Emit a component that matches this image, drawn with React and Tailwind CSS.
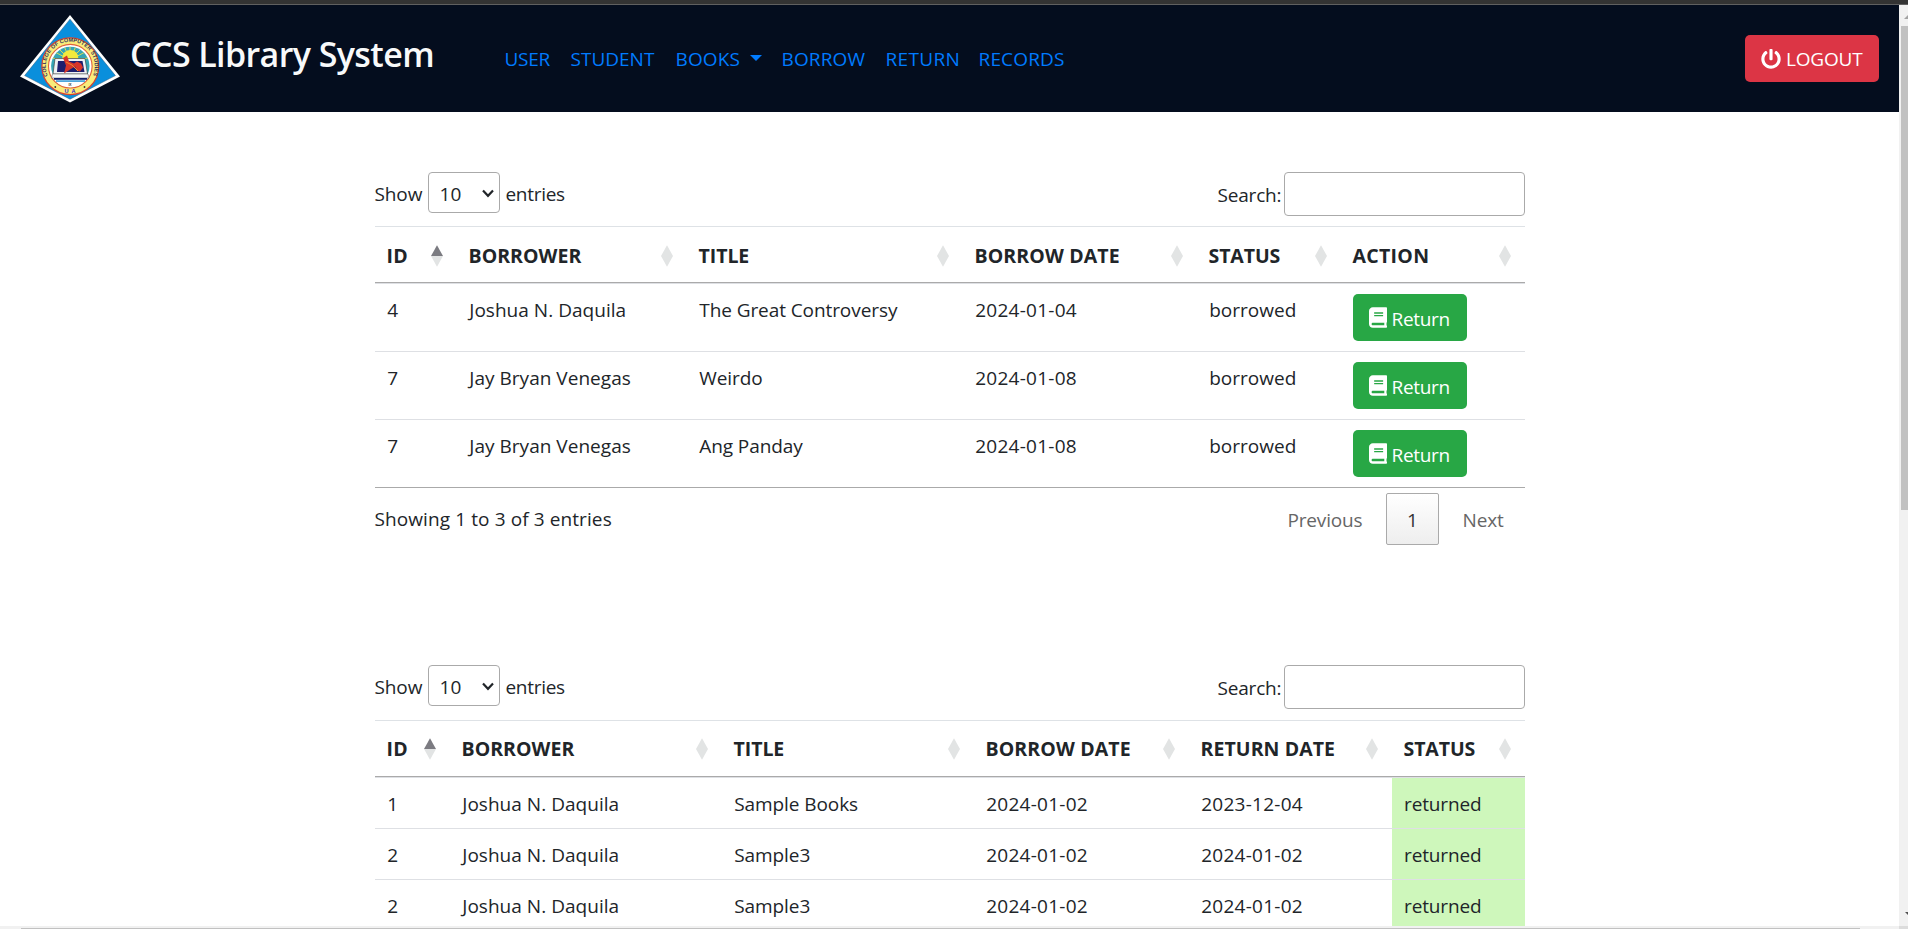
import { FaBook, FaPowerOff } from "react-icons/fa";

const NAV = [
  { label: "USER", cls: "w-[66px] tracking-[-0.28px]" },
  { label: "STUDENT", cls: "w-[105px] tracking-[0px]" },
  { label: "BOOKS", cls: "w-[106px] tracking-[0.13px]", caret: true },
  { label: "BORROW", cls: "w-[104px] tracking-[0.14px]" },
  { label: "RETURN", cls: "w-[93px] tracking-[0.33px]" },
  { label: "RECORDS", cls: "w-[90px] tracking-[0.16px]" },
];

const BORROWED_COLS = [
  { label: "ID", w: "w-[82px]", th: "tracking-[0.3px]", sorted: true },
  { label: "BORROWER", w: "w-[230px]", th: "tracking-[0.04px]" },
  { label: "TITLE", w: "w-[276px]", th: "tracking-[-0.05px]" },
  { label: "BORROW DATE", w: "w-[234px]", th: "tracking-[0.12px]" },
  { label: "STATUS", w: "w-[144px]", th: "tracking-[-0.1px]" },
  { label: "ACTION", w: "w-[184px]", th: "tracking-[0.3px]" },
];

const BORROWED_ROWS = [
  ["4", "Joshua N. Daquila", "The Great Controversy", "2024-01-04"],
  ["7", "Jay Bryan Venegas", "Weirdo", "2024-01-08"],
  ["7", "Jay Bryan Venegas", "Ang Panday", "2024-01-08"],
];

const RETURNED_COLS = [
  { label: "ID", w: "w-[75px]", th: "tracking-[0.3px]", sorted: true },
  { label: "BORROWER", w: "w-[272px]", th: "tracking-[0.04px]" },
  { label: "TITLE", w: "w-[252px]", th: "tracking-[-0.05px]" },
  { label: "BORROW DATE", w: "w-[215px]", th: "tracking-[0.12px]" },
  { label: "RETURN DATE", w: "w-[203px]", th: "tracking-[0.08px]" },
  { label: "STATUS", w: "w-[133px]", th: "tracking-[-0.1px]" },
];

const RETURNED_ROWS = [
  ["1", "Joshua N. Daquila", "Sample Books", "2024-01-02", "2023-12-04"],
  ["2", "Joshua N. Daquila", "Sample3", "2024-01-02", "2024-01-02"],
  ["2", "Joshua N. Daquila", "Sample3", "2024-01-02", "2024-01-02"],
];

const CELL_TRACKING = ["", "tracking-[0.03px]", "tracking-[-0.08px]", "tracking-[0.25px]", "tracking-[0.25px]"];

function Logo() {
  return (
    <svg className="h-[88px] w-[100px] shrink-0" viewBox="0 0 100 88">
      <defs>
        <path id="ring" d="M 28.2 61.9 A 24.5 24.5 0 1 1 72.4 61.9" />
        <clipPath id="disc"><circle cx="50.3" cy="51" r="19.2" /></clipPath>
      </defs>
      <polygon points="50,0 100,61.5 50,87.5 0,61.5" fill="#fff" />
      <polygon points="50,4.2 95.4,60.6 50,84.2 4.6,60.6" fill="#0a8fdc" stroke="#2a5d80" strokeWidth="0.5" />
      <circle cx="50.3" cy="51.2" r="28.4" fill="#f9ec7a" stroke="#d9452e" strokeWidth="1.3" />
      <circle cx="50.3" cy="51.2" r="21.8" fill="#fff" stroke="#e0623a" strokeWidth="1.1" />
      <g clipPath="url(#disc)">
        <rect x="30" y="31" width="41" height="30" fill="#35a5b5" />
        <path
          d="M50 45 L33 36 M50 45 L38 33 M50 45 L44 31 M50 45 L50 31 M50 45 L56 31 M50 45 L62 33 M50 45 L67 36 M50 45 L31 43 M50 45 L69 43"
          stroke="#d9dc55"
          strokeWidth="1"
        />
        <circle cx="50.3" cy="43" r="8" fill="#f3ea3c" />
      </g>
      <polygon points="35,43.5 65,43.5 67.5,59 33,59" fill="#eef1f4" stroke="#333" strokeWidth="0.6" />
      <polygon points="38,46 62.5,46 64.5,57 37,57" fill="#1d1e6e" />
      <path d="M43 43 l4 -2.5 2 6 5 2 3 -2 4 2 2 4 -3 4 -3 -1 -2 -4 -5 3 -6 4 2 -8 z" fill="#d7352a" />
      <path d="M46 47 l6 3 6 6" stroke="#f08a2c" strokeWidth="1" fill="none" />
      <polygon points="32.5,59 68,59 69,63 31.5,63" fill="#f5f7fa" stroke="#555" strokeWidth="0.5" />
      <rect x="34" y="63" width="33" height="1.8" fill="#15206b" />
      <rect x="36" y="65.2" width="29" height="1.8" fill="#4da7dd" />
      <text fontFamily="Liberation Sans, sans-serif" fontSize="5.4" fontWeight="700" fill="#34305a">
        <textPath href="#ring" startOffset="1" textLength="96" lengthAdjust="spacing">COLLEGE OF COMPUTER STUDIES</textPath>
      </text>
      <text x="50" y="71.3" textAnchor="middle" fontFamily="Liberation Sans, sans-serif" fontSize="3.4" fontWeight="700" fill="#333">IX</text>
      <text x="51.5" y="78.2" textAnchor="middle" fontFamily="Liberation Sans, sans-serif" fontSize="5.6" fontWeight="700" letterSpacing="3" fill="#1a1ad0">UA</text>
      <circle cx="35.3" cy="72" r="0.9" fill="#333" />
      <circle cx="64.5" cy="72" r="0.9" fill="#333" />
    </svg>
  );
}

function SortIcon({ sorted }) {
  return (
    <svg className="h-[22px] w-[12px]" viewBox="0 0 12 22">
      <polygon points="6,0.3 12,11 0,11" fill={sorted ? "#7b7b81" : "#e2e4e4"} />
      <polygon points="0,11 12,11 6,21.7" fill="#e2e4e4" />
    </svg>
  );
}

function Controls() {
  return (
    <div className="flex h-[44px] items-start justify-between">
      <div className="flex">
        <span className="w-[53px] pt-[7px] tracking-[-0.1px]">Show</span>
        <div className="flex h-[41px] w-[72px] items-start justify-between rounded-[4px] border border-[#aaa] pt-[6px] pr-[5px] pl-[11px]">
          <span className="tracking-[0.14px]">10</span>
          <svg className="mt-[10px] h-[10px] w-[12px]" viewBox="0 0 12 10" fill="none" stroke="#212529" strokeWidth="2.2">
            <path d="M1 1.6 L6 6.8 L11 1.6" />
          </svg>
        </div>
        <span className="pt-[7px] pl-[6px] tracking-[-0.3px]">entries</span>
      </div>
      <div className="flex">
        <span className="w-[66px] pt-[8px] tracking-[-0.19px]">Search:</span>
        <div className="h-[44px] w-[241px] rounded-[4px] border border-[#aaa] bg-white" />
      </div>
    </div>
  );
}

function HeaderRow({ cols, pad }) {
  return (
    <div className="flex h-[57px] border-t border-b border-t-[#dee2e6] border-b-[#aaa] text-[19.5px] font-bold">
      {cols.map((c) => (
        <div key={c.label} className={`flex items-start justify-between pr-[13.5px] pl-[12px] ${pad} ${c.w}`}>
          <span className={`whitespace-nowrap ${c.th}`}>{c.label}</span>
          <span className="pt-[4px]"><SortIcon sorted={c.sorted} /></span>
        </div>
      ))}
    </div>
  );
}

function Cell({ col, i, children }) {
  return <div className={`pt-[11px] pl-[12.75px] whitespace-nowrap ${CELL_TRACKING[i]} ${col.w}`}>{children}</div>;
}

export default function App() {
  return (
    <div className="flex h-[929px] w-[1908px] flex-col overflow-hidden bg-white font-['Open_Sans','Noto_Sans',sans-serif] text-[19px] leading-[30px] text-[#212529]">
      <div className="h-[5px] shrink-0 border-b border-[#606060] bg-[#333]" />
      <div className="flex h-[921px] shrink-0">
        <div className="h-[921px] w-[1899px] overflow-hidden">
          <header className="flex h-[107px] items-center bg-[#040d1e] pr-[20px] pl-[20px]">
            <Logo />
            <h1 className="w-[374px] pb-[9px] pl-[10px] text-[34px] leading-[40px] font-semibold tracking-[-0.6px] whitespace-nowrap text-[#f8f9fa]">
              CCS Library System
            </h1>
            <nav className="flex flex-1 pl-[10.5px] text-[#007bff]">
              {NAV.map((n) => (
                <a key={n.label} className={`flex shrink-0 ${n.cls}`}>
                  {n.label}
                  {n.caret && (
                    <svg className="mt-[11px] ml-[10px] h-[6px] w-[12px]" viewBox="0 0 12 6" fill="#007bff">
                      <polygon points="0,0 12,0 6,6" />
                    </svg>
                  )}
                </a>
              ))}
            </nav>
            <button className="flex h-[47px] w-[134px] items-center rounded-[5px] bg-[#dc3545] pl-[16px] text-white">
              <FaPowerOff className="h-[20px] w-[20px]" />
              <span className="pl-[5px] tracking-[-0.2px]">LOGOUT</span>
            </button>
          </header>

          <main className="mx-auto w-[1150px] pt-[60px]">
            <section className="h-[493px]">
              <Controls />
              <div className="mt-[10px]">
                <HeaderRow cols={BORROWED_COLS} pad="pt-[14px]" />
                <div className="border-b border-[#aaa]">
                  {BORROWED_ROWS.map((r, k) => (
                    <div key={k} className="flex h-[68px] border-t border-[#dee0e4]">
                      {r.map((v, i) => (
                        <Cell key={i} col={BORROWED_COLS[i]} i={i}>{v}</Cell>
                      ))}
                      <Cell col={BORROWED_COLS[4]} i={0}>borrowed</Cell>
                      <div className="w-[184px] pt-[10px] pl-[12px]">
                        <button className="flex h-[47px] w-[114px] items-center rounded-[5px] bg-[#28a745] pl-[16px] text-white">
                          <FaBook className="h-[21px] w-[18px]" />
                          <span className="pt-[2px] pl-[5px] tracking-[-0.3px]">Return</span>
                        </button>
                      </div>
                    </div>
                  ))}
                </div>
              </div>
              <div className="flex justify-between pt-[5px]">
                <span className="pt-[11px] tracking-[0.1px]">Showing 1 to 3 of 3 entries</span>
                <div className="flex text-[#666]">
                  <span className="w-[98px] pt-[12px] tracking-[-0.18px]">Previous</span>
                  <span className="h-[52px] w-[53px] rounded-[2px] border border-[#aaa] bg-linear-to-b from-white to-[#eee] pt-[11px] pl-px text-center text-[#333]">
                    1
                  </span>
                  <span className="w-[86px] pt-[12px] pl-[24px] tracking-[-0.14px]">Next</span>
                </div>
              </div>
            </section>

            <section>
              <Controls />
              <div className="mt-[11px]">
                <HeaderRow cols={RETURNED_COLS} pad="pt-[13px]" />
                {RETURNED_ROWS.map((r, k) => (
                  <div key={k} className="flex h-[51px] border-t border-[#dee0e4]">
                    {r.map((v, i) => (
                      <Cell key={i} col={RETURNED_COLS[i]} i={i}>{v}</Cell>
                    ))}
                    <div className="w-[133px] bg-[#cef7bb] pt-[11px] pl-[12.5px] tracking-[-0.14px]">returned</div>
                  </div>
                ))}
              </div>
            </section>
          </main>
        </div>

        <div className="flex w-[9px] flex-col items-end bg-[#f1f1f1]">
          <svg className="mt-[10px] h-[5px] w-[4px]" viewBox="0 0 4 5" fill="#a3a3a3">
            <polygon points="4,0 4,4 0,4" />
          </svg>
          <div className="mt-[6px] h-[484px] w-[7px] bg-[#c1c1c1]" />
          <svg className="mt-[402px] h-[3px] w-[3px]" viewBox="0 0 3 3" fill="#505050">
            <polygon points="0,0 3,0 3,3" />
          </svg>
        </div>
      </div>
      <div className="flex h-[3px] shrink-0 bg-[#f1f1f1]">
        <div className="mt-[2px] ml-[21px] h-px w-[1839px] bg-[#c1c1c1]" />
        <div className="ml-auto h-[3px] w-[9px] bg-[#dcdcdc]" />
      </div>
    </div>
  );
}
